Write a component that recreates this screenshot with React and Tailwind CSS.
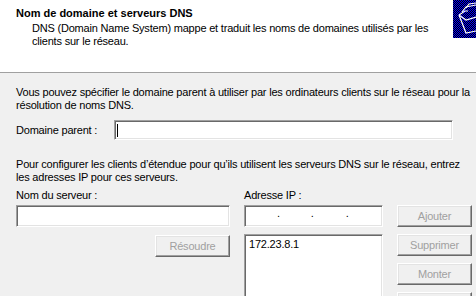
import React from "react"

function WizardIcon() {
    return (
        <div className="relative w-[23px] h-[38px] bg-[#0000ff] bg-[repeating-conic-gradient(#0000ff_0_25%,#000000_0_50%)] bg-[length:2px_2px]">
            <svg width="23" height="38" viewBox="0 0 23 38" className="absolute left-0 top-0">
                <g stroke="#ffffff" strokeWidth="1.2" fill="none">
                    <path d="M6 15 L13 33 L23 31" />
                    <path d="M6 15 L13 20 L23 17" />
                    <path d="M6 15 L12 11 L15 11" />
                    <path d="M9 12 L13 7 L23 5" />
                    <path d="M13 8 L16 4 L23 3" />
                </g>
            </svg>
        </div>
    )
}

function Sunken({ className, children }) {
    return (
        <div className={"bg-white border border-t-[#a0a0a0] border-l-[#a0a0a0] border-b-white border-r-white shadow-[inset_1px_1px_0_#696969,inset_-1px_-1px_0_#e3e3e3] " + className}>
            {children}
        </div>
    )
}

function Btn({ label, className }) {
    return (
        <div className={"w-[75px] h-[22px] flex items-center justify-center text-[#a0a0a0] bg-[#f0f0f0] border border-t-white border-l-white border-r-[#696969] border-b-[#696969] shadow-[inset_-1px_-1px_0_#a0a0a0,inset_1px_1px_0_#e3e3e3] " + (className || "")}>
            {label}
        </div>
    )
}

export default function App() {
    return (
        <div className="w-[476px] h-[296px] overflow-hidden bg-[#f0f0f0] text-black text-[11px] leading-[13px] tracking-[-0.2px] font-['Liberation_Sans',Arial,sans-serif]">
            <div className="h-[73px] bg-white border-b border-[#a0a0a0] flex justify-between">
                <div className="pt-[7px] pl-[16px]">
                    <div className="font-bold tracking-normal">Nom de domaine et serveurs DNS</div>
                    <div className="pl-[16px] pt-[2px] w-[430px]">
                        DNS (Domain Name System) mappe et traduit les noms de domaines utilisés par les clients sur le réseau.
                    </div>
                </div>
                <div>
                    <WizardIcon />
                </div>
            </div>

            <div className="pl-[16px] pt-[13px]">
                <div className="w-[458px]">
                    Vous pouvez spécifier le domaine parent à utiliser par les ordinateurs clients sur le réseau pour la résolution de noms DNS.
                </div>
                <div className="flex items-center mt-[8px]">
                    <div className="w-[98px]">Domaine parent :</div>
                    <Sunken className="w-[339px] h-[20px] flex items-center pl-[2px]">
                        <div className="w-[1px] h-[13px] bg-black"></div>
                    </Sunken>
                </div>
                <div className="w-[455px] mt-[18px]">
                    Pour configurer les clients d’étendue pour qu’ils utilisent les serveurs DNS sur le réseau, entrez les adresses IP pour ces serveurs.
                </div>

                <div className="flex mt-[5px] gap-[14px]">
                    <div className="w-[214px] flex flex-col">
                        <div>Nom du serveur :</div>
                        <Sunken className="mt-[3px] h-[22px]" />
                        <div className="flex justify-end mt-[8px]">
                            <Btn label="Résoudre" />
                        </div>
                    </div>
                    <div className="w-[139px] flex flex-col">
                        <div>Adresse IP :</div>
                        <Sunken className="mt-[3px] h-[22px] flex items-end pb-[6px]">
                            <span className="ml-[32px]">.</span>
                            <span className="ml-[31px]">.</span>
                            <span className="ml-[32px]">.</span>
                        </Sunken>
                        <Sunken className="mt-[7px] h-[80px] pl-[4px] pt-[3px]">
                            172.23.8.1
                        </Sunken>
                    </div>
                    <div className="w-[75px] flex flex-col gap-[7px] pt-[16px]">
                        <Btn label="Ajouter" />
                        <Btn label="Supprimer" />
                        <Btn label="Monter" />
                        <Btn label="" />
                    </div>
                </div>
            </div>
        </div>
    )
}
